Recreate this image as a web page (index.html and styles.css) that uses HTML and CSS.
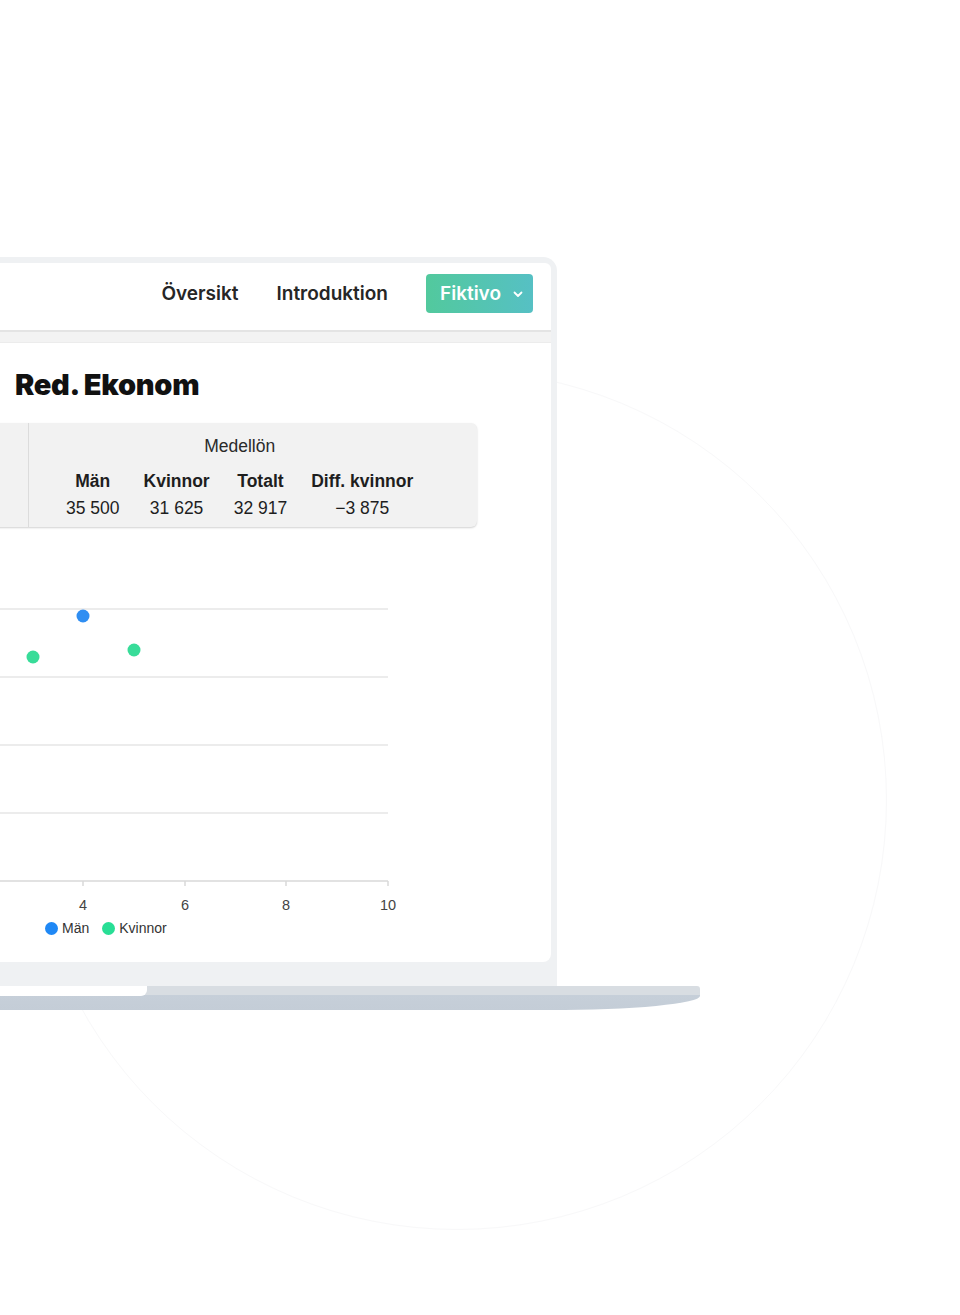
FILE: index.html
```html
<!DOCTYPE html>
<html lang="sv">
<head>
<meta charset="utf-8">
<title>Red. Ekonom – Medellön</title>
<link rel="stylesheet" href="styles.css">
</head>
<body>
<div class="halo"></div>
<div class="stage">
  <div class="laptop">
    <div class="lid">
      <nav class="topnav">
        <a class="navlink">Översikt</a>
        <a class="navlink">Introduktion</a>
        <button class="org-btn">Fiktivo
          <svg class="chev" viewBox="0 0 12 12" width="12" height="12"><path d="M2.5 4.5 L6 8 L9.5 4.5" fill="none" stroke="#fff" stroke-width="1.8" stroke-linecap="round" stroke-linejoin="round"/></svg>
        </button>
      </nav>
      <div class="band"></div>
      <main class="panel">
        <h1 class="title">Red. Ekonom</h1>
        <div class="salary-card">
          <div class="label-col"></div>
          <div class="salary-group">
            <div class="group-head">Medellön</div>
            <div class="cols">
              <div class="col"><span class="h">Män</span><span class="v">35 500</span></div>
              <div class="col"><span class="h">Kvinnor</span><span class="v">31 625</span></div>
              <div class="col"><span class="h">Totalt</span><span class="v">32 917</span></div>
              <div class="col"><span class="h">Diff. kvinnor</span><span class="v">−3 875</span></div>
            </div>
          </div>
        </div>
        <svg class="chart" width="450" height="388" viewBox="0 0 450 388">
          <g class="grid">
            <line x1="0" y1="82" x2="428" y2="82"/>
            <line x1="0" y1="150" x2="428" y2="150"/>
            <line x1="0" y1="218" x2="428" y2="218"/>
            <line x1="0" y1="286" x2="428" y2="286"/>
          </g>
          <g class="axis">
            <line x1="0" y1="354" x2="428" y2="354"/>
            <line x1="123" y1="354" x2="123" y2="359"/>
            <line x1="225" y1="354" x2="225" y2="359"/>
            <line x1="326" y1="354" x2="326" y2="359"/>
            <line x1="428" y1="354" x2="428" y2="359"/>
          </g>
          <g class="ticks">
            <text x="123" y="383">4</text>
            <text x="225" y="383">6</text>
            <text x="326" y="383">8</text>
            <text x="428" y="383">10</text>
          </g>
          <circle class="pt-men" cx="123" cy="89" r="6.5"/>
          <circle class="pt-women" cx="73" cy="130" r="6.5"/>
          <circle class="pt-women" cx="174" cy="123" r="6.5"/>
        </svg>
        <div class="legend">
          <span class="item"><span class="dot men"></span>Män</span>
          <span class="item"><span class="dot women"></span>Kvinnor</span>
        </div>
      </main>
    </div>
    <div class="base"><div class="notch"></div></div>
  </div>
</div>
</body>
</html>
```
FILE: styles.css
```css
* { box-sizing: border-box; }

html, body {
  margin: 0;
  background: #fff;
  overflow: hidden;
}

body {
  position: relative;
  width: 960px;
  height: 1315px;
  font-family: "Liberation Sans", Arial, sans-serif;
  color: #222;
}

/* faint decorative ring behind the device */
.halo {
  position: absolute;
  left: 27px;
  top: 370px;
  width: 860px;
  height: 860px;
  border-radius: 50%;
  border: 1px solid #f8f8f9;
  z-index: 0;
}

.stage {
  position: relative;
  z-index: 1;
  padding-top: 257px;
}

.laptop {
  margin-left: -143px;
  width: 843px;
}

/* screen lid with its bezel */
.lid {
  width: 700px;
  background: #eff1f3;
  border-radius: 0 14px 0 0;
  padding: 6px 6px 24px 6px;
}

.topnav {
  height: 69px;
  background: #fff;
  border-radius: 0 6px 0 0;
  display: flex;
  justify-content: flex-end;
  align-items: center;
  gap: 38px;
  padding: 0 18px 6px 0;
  border-bottom: 2px solid #e4e4e4;
  font-family: Inter, "Liberation Sans", sans-serif;
}

.navlink {
  font-size: 19px;
  font-weight: 600;
  color: #262626;
}

.org-btn {
  display: flex;
  align-items: center;
  gap: 11px;
  height: 39px;
  padding: 0 9px 0 14px;
  border: 0;
  border-radius: 4px;
  background: linear-gradient(90deg, #52c99d 0%, #56c0c4 100%);
  color: #fff;
  font-family: Inter, "Liberation Sans", sans-serif;
  font-size: 19px;
  font-weight: 600;
}

.chev { display: block; }

.band {
  height: 11px;
  background: #f3f3f3;
  border-bottom: 1px solid #ececec;
}

.panel {
  height: 619px;
  background: #fff;
  border-radius: 0 0 8px 0;
  padding: 24px 0 0 97px;
}

.title {
  margin: 0 0 20px 55px;
  font-family: Inter, "Liberation Sans", sans-serif;
  font-size: 29px;
  font-weight: 900;
  line-height: 36px;
  color: #111;
  letter-spacing: -0.3px;
}

/* salary summary table */
.salary-card {
  display: flex;
  width: 517px;
  height: 104px;
  background: #f2f2f2;
  border-radius: 0 6px 6px 0;
  box-shadow: 0 1px 2px rgba(0, 0, 0, 0.18);
  font-size: 17.5px;
  color: #1e1e1e;
}

.label-col {
  width: 69px;
  border-right: 1px solid #dcdcdc;
}

.salary-group {
  padding: 12px 50px 0 25px;
}

.group-head {
  text-align: center;
  line-height: 22px;
  color: #2a2a2a;
}

.cols {
  display: flex;
  margin-top: 13px;
}

.col {
  display: flex;
  flex-direction: column;
  align-items: center;
  gap: 5px;
  padding: 0 12px;
  line-height: 22px;
}

.col .h { font-weight: 700; }

/* scatter chart */
.chart {
  display: block;
  overflow: visible;
}

.grid line {
  stroke: #e6e6e6;
  stroke-width: 1.5;
}

.axis line {
  stroke: #d8d8d8;
  stroke-width: 1.5;
}

.ticks text {
  font-family: "Liberation Sans", Arial, sans-serif;
  font-size: 14.5px;
  fill: #444;
  text-anchor: middle;
}

.pt-men { fill: #2f8ef2; }
.pt-women { fill: #38dc99; }

.legend {
  display: flex;
  gap: 13px;
  margin-top: 5px;
  padding-left: 85px;
  font-size: 14px;
  line-height: 16px;
  color: #333;
}

.item {
  display: flex;
  align-items: center;
  gap: 4px;
}

.dot {
  width: 13px;
  height: 13px;
  border-radius: 50%;
}

.dot.men { background: #1f88f5; }
.dot.women { background: #28de95; }

/* keyboard base below the lid */
.base {
  width: 843px;
  height: 24px;
  background: linear-gradient(180deg, #d8dde2 0, #d8dde2 9px, #c6cfd9 9px, #c4cdd7 100%);
  border-radius: 0 3px 0 0 / 0 3px 0 0;
  border-bottom-right-radius: 150px 14px;
}

.notch {
  width: 290px;
  height: 10px;
  background: #fff;
  border-radius: 0 0 6px 0;
}
```
